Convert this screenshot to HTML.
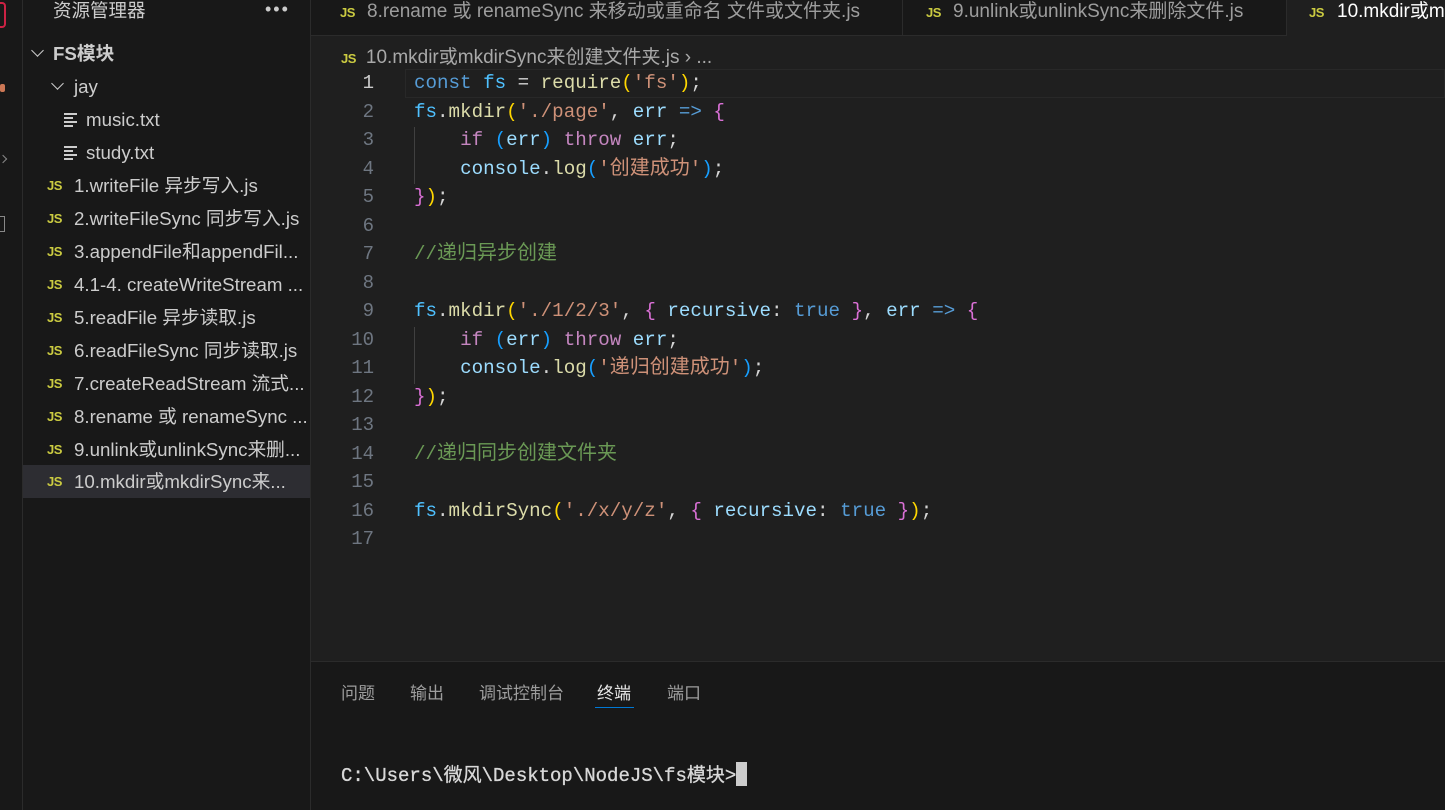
<!DOCTYPE html>
<html><head><meta charset="utf-8"><style>
*{margin:0;padding:0;box-sizing:border-box}
body{width:1445px;height:810px;overflow:hidden;background:#1f1f1f;font-family:"Liberation Sans","Microsoft YaHei","Noto Sans CJK SC",sans-serif;color:#ccc;position:relative}
.abs{position:absolute}
#act{left:0;top:0;width:23px;height:810px;background:#181818;border-right:1px solid #2b2b2b}
#side{left:23px;top:0;width:288px;height:810px;background:#181818;border-right:1px solid #2b2b2b}
.row{position:absolute;left:0;width:287px;height:33px;line-height:33px;font-size:18.7px;color:#ccc;white-space:nowrap;overflow:hidden}
.js{position:absolute;font-size:13px;font-weight:bold;color:#cbcb41;letter-spacing:-.5px}
.chev{position:absolute;width:9px;height:9px;border-right:1.6px solid #ccc;border-bottom:1.6px solid #ccc;transform:rotate(45deg)}
.lines{position:absolute;width:13px}
.lines i{display:block;height:2px;background:#ccc;margin-bottom:2px}
#tabs{left:311px;top:0;width:1134px;height:36px;background:#181818}
.tab{position:absolute;top:0;height:36px;line-height:24px;font-size:19px;color:#9d9d9d;white-space:nowrap;background:#181818;border-right:1px solid #2b2b2b;border-bottom:1px solid #2b2b2b;overflow:hidden}
.code{position:absolute;left:414px;font-family:"Liberation Mono","Noto Sans CJK SC",monospace;font-size:19.2px;white-space:normal;color:#d4d4d4}
.code div{height:28.5px;line-height:28.5px;white-space:pre}
.code .cj{font-size:20px;line-height:1}
.ln{position:absolute;left:330px;width:44px;text-align:right;font-family:"Liberation Mono",monospace;font-size:19px;color:#6e7681;line-height:28.5px}
.k{color:#569cd6}.v{color:#4fc1ff}.p{color:#9cdcfe}.f{color:#dcdcaa}.s{color:#ce9178}.c{color:#6a9955}.y{color:#ffd700}.m{color:#da70d6}.b{color:#179fff}.kk{color:#c586c0}
#panel{left:311px;top:661px;width:1134px;height:149px;background:#181818;border-top:1px solid #2b2b2b}
.pt{position:absolute;top:17px;font-size:17px;color:#9d9d9d}
</style></head><body>
<div id="act" class="abs">
<div class="abs" style="left:0;top:2px;width:6px;height:26px;border:2px solid #c24;border-left:none;border-radius:0 4px 4px 0"></div>
<div class="abs" style="left:0;top:84px;width:5px;height:8px;background:#c75;border-radius:2px"></div>
<div class="abs" style="left:0;top:156px;width:6px;height:6px;border-right:1.5px solid #888;border-top:1.5px solid #888;transform:rotate(45deg)"></div>
<div class="abs" style="left:0;top:216px;width:5px;height:16px;border:1.5px solid #888;border-left:none"></div>
</div>
<div id="side" class="abs">
<div class="abs" style="left:30px;top:0;font-size:18.5px;color:#ccc;line-height:22px">资源管理器</div>
<div class="abs" style="left:242px;top:0;font-size:18px;color:#ccc;letter-spacing:2px;line-height:18px">•••</div>
<div class="row" style="top:37px"><span class="chev" style="left:10px;top:9px"></span><span style="position:absolute;left:30px;font-weight:bold">FS模块</span></div>
<div class="row" style="top:70px"><span class="chev" style="left:30px;top:9px"></span><span style="position:absolute;left:51px">jay</span></div>
<div class="row" style="top:103px"><span class="lines" style="left:41px;top:10px"><i></i><i style="width:9px"></i><i></i><i style="width:9px"></i></span><span style="position:absolute;left:63px">music.txt</span></div>
<div class="row" style="top:136px"><span class="lines" style="left:41px;top:10px"><i></i><i style="width:9px"></i><i></i><i style="width:9px"></i></span><span style="position:absolute;left:63px">study.txt</span></div>
<div class="row" style="top:169px"><span class="js" style="left:24px">JS</span><span style="position:absolute;left:51px">1.writeFile 异步写入.js</span></div>
<div class="row" style="top:202px"><span class="js" style="left:24px">JS</span><span style="position:absolute;left:51px">2.writeFileSync 同步写入.js</span></div>
<div class="row" style="top:235px"><span class="js" style="left:24px">JS</span><span style="position:absolute;left:51px">3.appendFile和appendFil...</span></div>
<div class="row" style="top:268px"><span class="js" style="left:24px">JS</span><span style="position:absolute;left:51px">4.1-4. createWriteStream ...</span></div>
<div class="row" style="top:301px"><span class="js" style="left:24px">JS</span><span style="position:absolute;left:51px">5.readFile 异步读取.js</span></div>
<div class="row" style="top:334px"><span class="js" style="left:24px">JS</span><span style="position:absolute;left:51px">6.readFileSync 同步读取.js</span></div>
<div class="row" style="top:367px"><span class="js" style="left:24px">JS</span><span style="position:absolute;left:51px">7.createReadStream 流式...</span></div>
<div class="row" style="top:400px"><span class="js" style="left:24px">JS</span><span style="position:absolute;left:51px">8.rename 或 renameSync ...</span></div>
<div class="row" style="top:433px"><span class="js" style="left:24px">JS</span><span style="position:absolute;left:51px">9.unlink或unlinkSync来删...</span></div>
<div class="row" style="top:465px;background:#2d2d32"><span class="js" style="left:24px">JS</span><span style="position:absolute;left:51px">10.mkdir或mkdirSync来...</span></div>
</div>
<div id="tabs" class="abs">
<div class="tab" style="left:0;width:592px"><span class="js" style="position:absolute;left:29px;top:1px">JS</span><span style="position:absolute;left:56px;top:0">8.rename 或 renameSync 来移动或重命名 文件或文件夹.js</span></div>
<div class="tab" style="left:592px;width:384px"><span class="js" style="position:absolute;left:23px;top:1px">JS</span><span style="position:absolute;left:50px;top:0">9.unlink或unlinkSync来删除文件.js</span></div>
<div class="tab" style="left:976px;width:158px;background:#1f1f1f;border:none;color:#fff"><span class="js" style="position:absolute;left:22px;top:1px">JS</span><span style="position:absolute;left:50px;top:0">10.mkdir或mkdirSync</span></div>
</div>
<div class="abs" style="left:341px;top:42px;font-size:19px;color:#a9a9a9;white-space:nowrap"><span class="js" style="position:static;margin-right:10px">JS</span>10.mkdir或mkdirSync来创建文件夹.js › ...</div>
<div class="abs" style="left:405px;top:69px;width:1040px;height:29px;border:1.5px solid #282828"></div>
<div class="abs" style="left:414px;top:127px;width:1px;height:57px;background:#404040"></div>
<div class="abs" style="left:414px;top:327px;width:1px;height:57px;background:#404040"></div>
<div class="ln" style="top:69px"><span style="color:#ccc">1</span><br>2<br>3<br>4<br>5<br>6<br>7<br>8<br>9<br>10<br>11<br>12<br>13<br>14<br>15<br>16<br>17</div>
<div class="code" style="top:69px"><div><span class="k">const</span> <span class="v">fs</span> = <span class="f">require</span><span class="y">(</span><span class="s">'fs'</span><span class="y">)</span>;</div><div><span class="v">fs</span>.<span class="f">mkdir</span><span class="y">(</span><span class="s">'./page'</span>, <span class="p">err</span> <span class="k">=&gt;</span> <span class="m">{</span></div><div>    <span class="kk">if</span> <span class="b">(</span><span class="p">err</span><span class="b">)</span> <span class="kk">throw</span> <span class="p">err</span>;</div><div>    <span class="p">console</span>.<span class="f">log</span><span class="b">(</span><span class="s">'<span class="cj">创建成功</span>'</span><span class="b">)</span>;</div><div><span class="m">}</span><span class="y">)</span>;</div><div> </div><div><span class="c">//<span class="cj">递归异步创建</span></span></div><div> </div><div><span class="v">fs</span>.<span class="f">mkdir</span><span class="y">(</span><span class="s">'./1/2/3'</span>, <span class="m">{</span> <span class="p">recursive</span>: <span class="k">true</span> <span class="m">}</span>, <span class="p">err</span> <span class="k">=&gt;</span> <span class="m">{</span></div><div>    <span class="kk">if</span> <span class="b">(</span><span class="p">err</span><span class="b">)</span> <span class="kk">throw</span> <span class="p">err</span>;</div><div>    <span class="p">console</span>.<span class="f">log</span><span class="b">(</span><span class="s">'<span class="cj">递归创建成功</span>'</span><span class="b">)</span>;</div><div><span class="m">}</span><span class="y">)</span>;</div><div> </div><div><span class="c">//<span class="cj">递归同步创建文件夹</span></span></div><div> </div><div><span class="v">fs</span>.<span class="f">mkdirSync</span><span class="y">(</span><span class="s">'./x/y/z'</span>, <span class="m">{</span> <span class="p">recursive</span>: <span class="k">true</span> <span class="m">}</span><span class="y">)</span>;</div></div>
<div id="panel" class="abs">
<div class="pt" style="left:30px">问题</div>
<div class="pt" style="left:99px">输出</div>
<div class="pt" style="left:168px">调试控制台</div>
<div class="pt" style="left:286px;color:#e7e7e7">终端</div>
<div class="abs" style="left:284px;top:45px;width:39px;height:1px;background:#0078d4"></div>
<div class="pt" style="left:356px">端口</div>
<div class="abs" style="left:30px;top:98px;font-family:'Liberation Mono','Noto Sans CJK SC',monospace;font-size:19px;color:#d8d8d8;white-space:nowrap;-webkit-text-stroke:0.3px #d8d8d8">C:\Users\微风\Desktop\NodeJS\fs模块&gt;<span style="display:inline-block;width:11px;height:24px;background:#ccc;vertical-align:-5px"></span></div>
</div>
</body></html>
